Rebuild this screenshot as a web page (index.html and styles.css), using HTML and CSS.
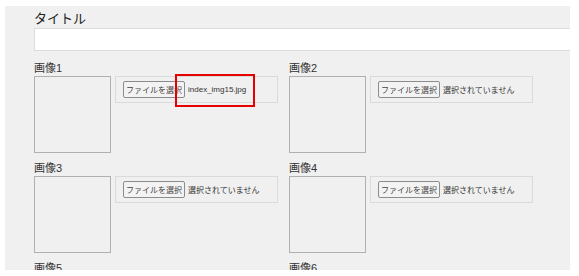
FILE: index.html
```html
<!DOCTYPE html>
<html>
<head>
  <title>画像登録</title>
  <link rel="stylesheet" href="styles.css">
</head>
<body>
  <div class="panel">
    <label class="title-label" for="title">タイトル</label>
    <input type="text" id="title" class="title-input">

    <div class="image-grid">
      <div class="image-cell">
        <div class="image-label">画像1</div>
        <div class="image-row">
          <div class="preview"></div>
          <div class="file-box">
            <button class="file-btn">ファイルを選択</button>
            <span class="file-name">index_img15.jpg</span>
          </div>
        </div>
        <div class="highlight"></div>
      </div>

      <div class="image-cell">
        <div class="image-label">画像2</div>
        <div class="image-row">
          <div class="preview"></div>
          <div class="file-box">
            <button class="file-btn">ファイルを選択</button>
            <span class="file-name">選択されていません</span>
          </div>
        </div>
      </div>

      <div class="image-cell">
        <div class="image-label">画像3</div>
        <div class="image-row">
          <div class="preview"></div>
          <div class="file-box">
            <button class="file-btn">ファイルを選択</button>
            <span class="file-name">選択されていません</span>
          </div>
        </div>
      </div>

      <div class="image-cell">
        <div class="image-label">画像4</div>
        <div class="image-row">
          <div class="preview"></div>
          <div class="file-box">
            <button class="file-btn">ファイルを選択</button>
            <span class="file-name">選択されていません</span>
          </div>
        </div>
      </div>

      <div class="image-cell">
        <div class="image-label">画像5</div>
        <div class="image-row">
          <div class="preview"></div>
          <div class="file-box">
            <button class="file-btn">ファイルを選択</button>
            <span class="file-name">選択されていません</span>
          </div>
        </div>
      </div>

      <div class="image-cell">
        <div class="image-label">画像6</div>
        <div class="image-row">
          <div class="preview"></div>
          <div class="file-box">
            <button class="file-btn">ファイルを選択</button>
            <span class="file-name">選択されていません</span>
          </div>
        </div>
      </div>
    </div>
  </div>
</body>
</html>
```

FILE: styles.css
```css
body {
    margin: 0;
    background-color: #fff;
    font-family: "Liberation Sans", "Noto Sans CJK JP", sans-serif;
    color: #333;
}

.panel {
    margin: 6px 9px 0 5px;
    height: 264px;
    overflow: hidden;
    box-sizing: border-box;
    padding: 4px 0 0 29px;
    background-color: #f0f0f0;
}

.title-label {
    display: block;
    font-size: 13px;
    line-height: 18px;
    color: #222;
}

.title-input {
    display: block;
    box-sizing: border-box;
    width: 560px;
    height: 23px;
    margin: 0 0 10px 0;
    border: 1px solid #dcdcdc;
    background-color: #fff;
}

.image-grid {
    display: grid;
    grid-template-columns: 255px 255px;
    row-gap: 8px;
}

.image-cell {
    position: relative;
}

.image-label {
    font-size: 11px;
    line-height: 14px;
    margin-bottom: 1px;
    color: #333;
}

.image-row {
    display: flex;
    align-items: flex-start;
    gap: 4px;
}

.preview {
    box-sizing: border-box;
    width: 77px;
    height: 77px;
    border: 1px solid #b0b0b0;
    background-color: #f0f0f0;
}

.file-box {
    box-sizing: border-box;
    display: flex;
    align-items: center;
    gap: 3px;
    width: 163px;
    height: 27px;
    padding: 0 0 0 7px;
    border: 1px solid #dadada;
    background-color: #f0f0f0;
}

.file-btn {
    box-sizing: border-box;
    height: 17px;
    width: 62px;
    padding: 0;
    border: 1px solid #8c8c8c;
    border-radius: 2px;
    background-color: #f3f3f3;
    font-family: "Liberation Sans", "Noto Sans CJK JP", sans-serif;
    font-size: 8px;
    color: #444;
    white-space: nowrap;
}

.file-name {
    font-size: 8px;
    color: #333;
    white-space: nowrap;
}

.highlight {
    position: absolute;
    left: 141px;
    top: 13px;
    width: 76px;
    height: 29px;
    border: 2px solid #e60000;
}
```
